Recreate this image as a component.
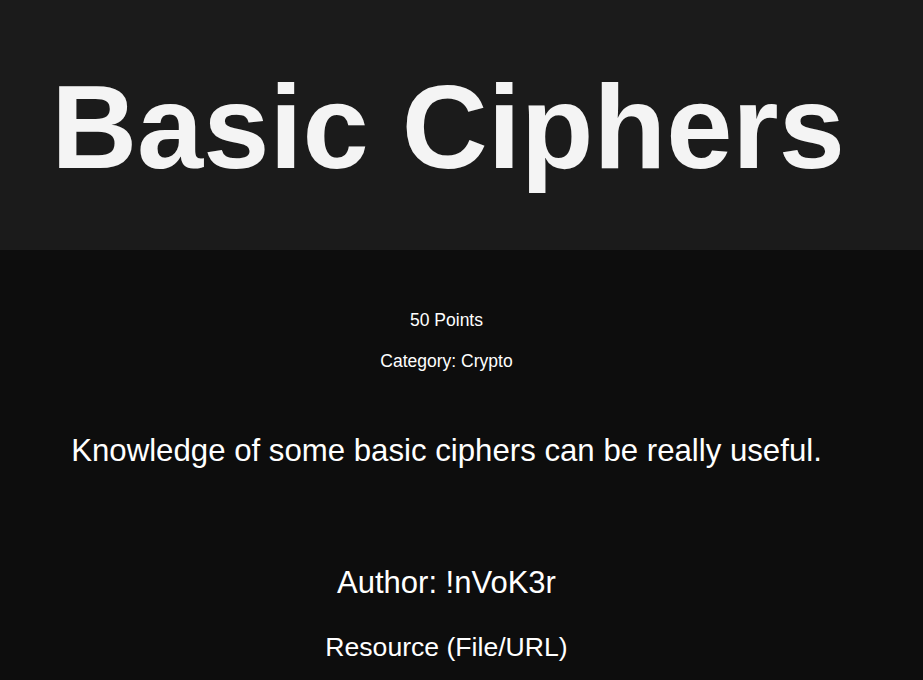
export default function App() {
  return (
    <div className="min-h-screen bg-[#0d0d0d] text-white" style={{ fontFamily: '"Liberation Sans", Arial, sans-serif' }}>
      {/* Header */}
      <div className="h-[250px] bg-[#1b1b1b]">
        <div className="w-[896px] pt-[67px] text-center">
          <h1 className="text-[119px] leading-[120px] font-bold text-[#f4f4f4]">Basic Ciphers</h1>
        </div>
      </div>

      {/* Challenge info */}
      <div className="w-[893px] pt-[58px] text-center">
        <p className="text-[17.5px] leading-[24px]">50 Points</p>
        <p className="mt-[17px] text-[17.5px] leading-[24px]">Category: Crypto</p>
        <p className="mt-[58px] text-[31.2px] leading-[40px]">Knowledge of some basic ciphers can be really useful.</p>
        <p className="mt-[92px] text-[31px] leading-[40px]">Author: !nVoK3r</p>
        <p className="mt-[26px] text-[26.6px] leading-[36px]">Resource (File/URL)</p>
      </div>
    </div>
  );
}
